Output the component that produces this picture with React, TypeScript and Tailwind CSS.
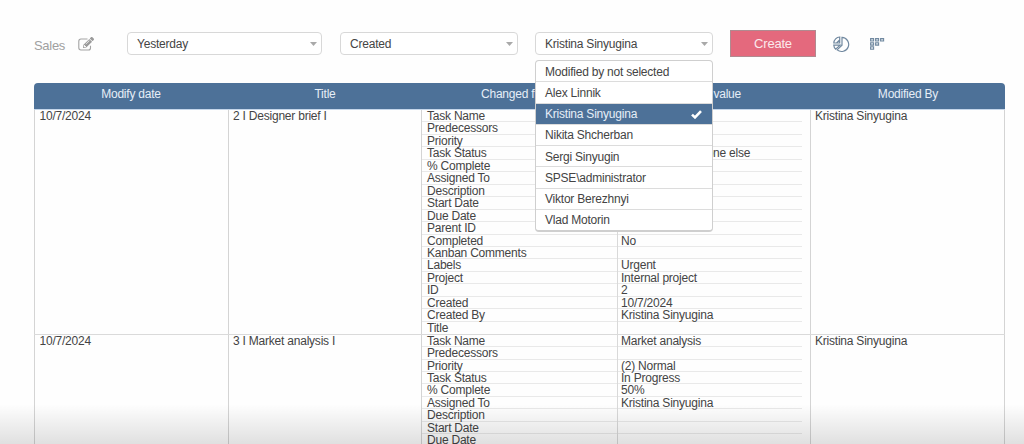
import React from "react";
import { FaPencilAlt } from "react-icons/fa";

const fields = [
  "Task Name", "Predecessors", "Priority", "Task Status", "% Complete", "Assigned To",
  "Description", "Start Date", "Due Date", "Parent ID", "Completed", "Kanban Comments",
  "Labels", "Project", "ID", "Created", "Created By", "Title",
];

type Entry = { date: string; title: string; values: Record<string, string>; by: string; shown: number };

const entries: Entry[] = [
  {
    date: "10/7/2024",
    title: "2 I Designer brief I",
    by: "Kristina Sinyugina",
    shown: 18,
    values: {
      "Task Status": "Waiting on someone else",
      Completed: "No",
      Labels: "Urgent",
      Project: "Internal project",
      ID: "2",
      Created: "10/7/2024",
      "Created By": "Kristina Sinyugina",
    },
  },
  {
    date: "10/7/2024",
    title: "3 I Market analysis I",
    by: "Kristina Sinyugina",
    shown: 9,
    values: {
      "Task Name": "Market analysis",
      Priority: "(2) Normal",
      "Task Status": "In Progress",
      "% Complete": "50%",
      "Assigned To": "Kristina Sinyugina",
    },
  },
];

const people = [
  "Modified by not selected", "Alex Linnik", "Kristina Sinyugina", "Nikita Shcherban",
  "Sergi Sinyugin", "SPSE\\administrator", "Viktor Berezhnyi", "Vlad Motorin",
];

function Select({ value, className, children }: { value: string; className: string; children?: React.ReactNode }) {
  return (
    <div className={`relative flex h-[23px] items-center justify-between rounded-[4px] border border-[#d8d8d8] bg-white pl-[9px] pr-[4px] pt-px ${className}`}>
      <span>{value}</span>
      <svg width="7" height="4" viewBox="0 0 7 4" className="fill-[#a9a9a9]">
        <path d="M0 0h7L3.5 4z" />
      </svg>
      {children}
    </div>
  );
}

function PeopleMenu() {
  return (
    <div className="absolute -left-px top-[27px] z-10 flex h-[172px] w-[178px] flex-col overflow-hidden rounded-[4px] border border-b-2 border-[#cfcfcf] bg-white">
      {people.map((name) => {
        const active = name === "Kristina Sinyugina";
        return (
          <div
            key={name}
            className={`flex flex-1 items-center justify-between border-b border-[#dcdcdc] pl-[9px] pr-[10px] pt-px last:border-b-0 ${active ? "bg-[#4d7198] text-[#e6eef7]" : ""}`}
          >
            <span>{name}</span>
            {active && (
              <svg width="11" height="9" viewBox="0 0 11 9" fill="none" stroke="#fff" strokeWidth="2.6">
                <path d="M1 4.6l3 2.8L10 1.2" />
              </svg>
            )}
          </div>
        );
      })}
    </div>
  );
}

function Toolbar() {
  return (
    <div className="flex h-[27px] items-center pl-[34px]">
      <span className="w-[44px] pt-[4px] text-[13px] tracking-[-0.3px] text-[#a0a0a0]">Sales</span>
      <div className="relative mr-[33px] h-[14px] w-[16px]">
        <svg width="15" height="14" viewBox="0 0 15 14" fill="none" stroke="#a3a3a3" strokeWidth="1.1" className="mt-px">
          <path d="M9.5 1H3A2.2 2.2 0 0 0 .8 3.2v6.6A2.2 2.2 0 0 0 3 12h7.5a2 2 0 0 0 2-2V7.8" />
        </svg>
        <FaPencilAlt className="absolute left-[5px] top-0 size-[11px] text-[#9a9a9a]" />
      </div>
      <Select value="Yesterday" className="w-[195px]" />
      <Select value="Created" className="ml-[18px] w-[178px]" />
      <Select value="Kristina Sinyugina" className="ml-[17px] w-[178px]">
        <PeopleMenu />
      </Select>
      <button className="ml-[17px] h-[27px] w-[86px] border border-[#b08a90] bg-[#e4697d] text-[13px] tracking-[-0.2px] text-[#fbe9ec]">Create</button>
      <svg width="17" height="17" viewBox="0 0 17 17" fill="none" stroke="#7189a0" strokeWidth="1.2" className="ml-[17px] mt-px">
        <path d="M9 1.3a7.1 7.1 0 1 1-4.9 12.6L9 9.2z" />
        <path d="M6.7 1v6H.8A6.3 6.3 0 0 1 6.7 1zM3.6 7l3-3.2M.8 9.2h6.4l-4.6 4A6.5 6.5 0 0 1 .8 9.2z" />
      </svg>
      <svg width="15" height="12" viewBox="0 0 15 12" fill="#dfe6ec" stroke="#7189a0" strokeWidth="1.1" className="ml-[20px]">
        <path d="M.6.6h3v2.4h-3zM5.6.6h3v2.4h-3zM10.6.6h3v2.4h-3zM.6 4.7h3v2.4h-3zM5.6 4.7h3v2.4h-3zM.6 8.8h3v2.4h-3z" />
      </svg>
    </div>
  );
}

function EntryRow({ entry }: { entry: Entry }) {
  return (
    <div className="grid h-[224.6px] grid-cols-[194px_193px_389px_1fr] border-b border-[#dadada] leading-[13px]">
      <div className="border-l border-[#d4d4d4] pl-[4.5px]">{entry.date}</div>
      <div className="border-l border-[#d4d4d4] pl-[4px]">{entry.title}</div>
      <div className="border-l border-[#d4d4d4]">
        {fields.slice(0, entry.shown).map((field) => (
          <div key={field} className="group grid h-[12.46px] grid-cols-[195px_1fr]">
            <div className="h-[12.46px] border-b border-[#e9e9e9] pl-[5px] whitespace-nowrap group-last:border-b-0">{field}</div>
            <div className="h-[12.46px] border-l border-[#d9d9d9] pr-[8px]">
              <div className="h-[12.46px] border-b border-[#e9e9e9] pl-[3px] whitespace-nowrap group-last:border-b-0">{entry.values[field]}</div>
            </div>
          </div>
        ))}
      </div>
      <div className="border-x border-[#d4d4d4] pl-[4px]">{entry.by}</div>
    </div>
  );
}

export default function App() {
  return (
    <div className="relative h-[444px] w-full overflow-hidden bg-[#fefefe] pt-[30px] font-['Liberation_Sans',Arial,sans-serif] text-[12px] tracking-[-0.22px] text-[#444]">
      <Toolbar />
      <div className="ml-[34px] mt-[26px] w-[971px]">
        <div className="grid h-[27px] grid-cols-[194px_194px_195px_194px_1fr] rounded-t-[4px] border-b border-[#c5d6ea] bg-[#4d7198] pt-[2px] text-center text-[#e6eef7]">
          <span>Modify date</span>
          <span>Title</span>
          <span>Changed fields</span>
          <span>New value</span>
          <span>Modified By</span>
        </div>
        {entries.map((entry) => (
          <EntryRow key={entry.title} entry={entry} />
        ))}
      </div>
      <div className="pointer-events-none absolute inset-x-0 bottom-0 h-[40px] bg-linear-to-b from-transparent to-black/12" />
    </div>
  );
}
